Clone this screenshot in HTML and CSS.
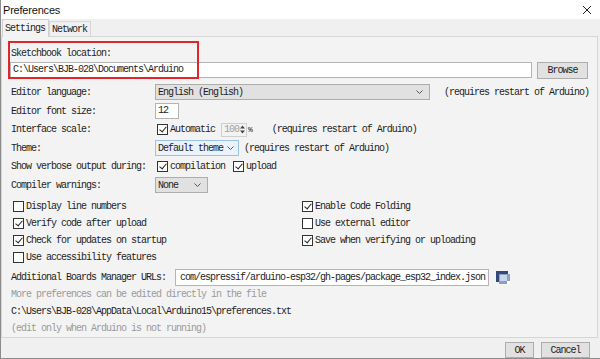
FILE: index.html
```html
<!doctype html>
<html>
<head>
<meta charset="utf-8">
<title>Preferences</title>
<link rel="stylesheet" href="styles.css">
</head>
<body>
<div class="win">
	<div class="titlebar">
		<span class="title">Preferences</span>
		<svg class="close" width="10" height="10" viewBox="0 0 10 10"><path d="M1 1L9 9M9 1L1 9" stroke="#222" stroke-width="1" fill="none"/></svg>
	</div>
	<div class="tabs">
		<span class="tab on">Settings</span>
		<span class="tab">Network</span>
	</div>
	<div class="panel">
		<div class="mark"></div>
		<div class="row">Sketchbook location:</div>
		<div class="row row-path">
			<span class="input path">C:\Users\BJB-028\Documents\Arduino</span>
			<span class="btn browse">Browse</span>
		</div>
		<div class="row row-lang">
			<span class="lbl">Editor language:</span>
			<span class="select lang">English (English)<svg class="arr" width="7" height="4" viewBox="0 0 7 4"><polyline points="0.5,0.5 3.5,3.5 6.5,0.5" fill="none" stroke="#555"/></svg></span>
			<span class="note lang-note">(requires restart of Arduino)</span>
		</div>
		<div class="row">
			<span class="lbl">Editor font size:</span>
			<span class="input size">12</span>
		</div>
		<div class="row">
			<span class="lbl">Interface scale:</span>
			<span class="cb on"></span>
			<span class="cb-text">Automatic</span>
			<span class="spin">100<svg width="5" height="9" viewBox="0 0 5 9"><path d="M0 3.5L2.5 0.5L5 3.5ZM0 5.5L2.5 8.5L5 5.5Z" fill="#444"/></svg></span>
			<span class="pct">%</span>
			<span class="note scale-note">(requires restart of Arduino)</span>
		</div>
		<div class="row">
			<span class="lbl">Theme:</span>
			<span class="select theme">Default theme<svg class="arr" width="7" height="4" viewBox="0 0 7 4"><polyline points="0.5,0.5 3.5,3.5 6.5,0.5" fill="none" stroke="#555"/></svg></span>
			<span class="note theme-note">(requires restart of Arduino)</span>
		</div>
		<div class="row">
			<span class="lbl">Show verbose output during:</span>
			<span class="cb on"></span>
			<span class="cb-text">compilation</span>
			<span class="cb on upload"></span>
			<span class="cb-text">upload</span>
		</div>
		<div class="row">
			<span class="lbl">Compiler warnings:</span>
			<span class="select warn">None<svg class="arr" width="7" height="4" viewBox="0 0 7 4"><polyline points="0.5,0.5 3.5,3.5 6.5,0.5" fill="none" stroke="#555"/></svg></span>
		</div>
		<div class="checks">
			<div class="check"><span class="cb"></span><span class="cb-text">Display line numbers</span></div>
			<div class="check"><span class="cb on"></span><span class="cb-text">Enable Code Folding</span></div>
			<div class="check"><span class="cb on"></span><span class="cb-text">Verify code after upload</span></div>
			<div class="check"><span class="cb"></span><span class="cb-text">Use external editor</span></div>
			<div class="check"><span class="cb on"></span><span class="cb-text">Check for updates on startup</span></div>
			<div class="check"><span class="cb on"></span><span class="cb-text">Save when verifying or uploading</span></div>
			<div class="check"><span class="cb"></span><span class="cb-text">Use accessibility features</span></div>
		</div>
		<div class="row row-url">
			<span class="lbl url-lbl">Additional Boards Manager URLs:</span>
			<span class="input url">com/espressif/arduino-esp32/gh-pages/package_esp32_index.json</span>
			<svg class="url-btn" width="16" height="16" viewBox="0 0 16 16">
				<rect x="1" y="1" width="12" height="11" fill="#34497a"/>
				<rect x="4" y="4" width="11" height="10" fill="#8da0c4"/>
				<rect x="5" y="5" width="7" height="6" fill="#c9d5ea"/>
				<rect x="12" y="11" width="3" height="3" fill="#fff"/>
			</svg>
		</div>
		<div class="info">
			<div class="dim">More preferences can be edited directly in the file</div>
			<div>C:\Users\BJB-028\AppData\Local\Arduino15\preferences.txt</div>
			<div class="dim">(edit only when Arduino is not running)</div>
		</div>
	</div>
	<div class="footer">
		<span class="btn ok">OK</span>
		<span class="btn cancel">Cancel</span>
	</div>
</div>
</body>
</html>
```

FILE: styles.css
```css
*{ margin:0; padding:0; box-sizing:border-box;}
body{ background:#f0f0f0; font-family:"Liberation Mono","DejaVu Sans Mono",monospace; font-size:10px; letter-spacing:-1px; color:#1e1e1e;}

.win{ width:600px; height:359px; display:flex; flex-direction:column; border-left:1px solid #8c8c8c; border-bottom:1px solid #8c8c8c; background:#f0f0f0;}

.titlebar{ height:19px; flex:none; display:flex; align-items:center; justify-content:space-between; background:#fff; padding:0 8px 0 2px;}
.title{ font-family:"Liberation Sans",Arial,sans-serif; font-size:11px; letter-spacing:-0.2px; color:#111;}
.close{ margin-top:1px;}

.tabs{ height:17px; flex:none; display:flex; align-items:flex-end; padding-left:1px;}
.tab{ height:15px; line-height:15px; padding:0 3px 0 2px; border:1px solid #d6d6d6; border-bottom:none; background:#f0f0f0;}
.tab.on{ height:18px; line-height:17px; margin-bottom:-1px; background:#f3f3f3; position:relative; z-index:1; border-color:#cfcfcf;}

.panel{ height:302px; flex:none; margin-right:2px; border:1px solid #d6d6d6; background:#f3f3f3; padding:9px 0 0 9px; display:flex; flex-direction:column; gap:3px; position:relative;}
.mark{ position:absolute; left:6px; top:4px; width:191px; height:38px; border:2px solid #e0252b; z-index:2;}

.row{ height:16px; display:flex; align-items:center; white-space:pre;}
.row-path{ margin-top:-2px;}
.row-lang{ margin-top:3px;}
.lbl{ width:144px; flex:none;}

.input{ height:16px; line-height:14px; border:1px solid #b4b4b4; background:#fff; padding-left:2px; white-space:pre; overflow:hidden;}
.path{ width:522px; margin-left:-1px;}
.size{ width:24px;}
.url{ width:314px; height:17px; line-height:15px; padding-left:4px;}

.btn{ display:flex; align-items:center; justify-content:center; height:16px; background:#e1e1e1; border:1px solid #adadad; color:#222;}
.browse{ width:51px; margin-left:5px; height:17px;}

.select{ height:16px; display:flex; align-items:center; justify-content:space-between; padding:0 6px 0 2px; background:#e1e1e1; border:1px solid #adadad;}
.lang{ width:275px;}
.theme{ width:84px; padding-right:4px; background:#eaf2fb; border-color:#9cc2e8;}
.warn{ width:53px;}
.arr{ flex:none;}

.note{ margin-left:14px;}
.scale-note{ margin-left:20px;}
.theme-note{ margin-left:5px;}

.cb{ width:11px; height:11px; flex:none; border:1px solid #333; background:#fff; margin-left:2px; position:relative;}
.cb.on:after{ content:""; position:absolute; left:3px; top:0; width:3px; height:6px; border:solid #222; border-width:0 1px 1px 0; transform:rotate(40deg);}
.cb-text{ margin-left:2px;}
.upload{ margin-left:8px;}

.spin{ width:26px; height:14px; margin-left:6px; border:1px solid #cfcfcf; background:#f3f3f3; color:#a0a0a0; display:flex; align-items:center; justify-content:space-between; padding:0 1px 0 2px;}
.pct{ margin-left:1px; font-size:8px;}

.checks{ margin-top:2px; display:grid; grid-template-columns:289px 1fr; grid-auto-rows:17px;}
.check{ display:flex; align-items:center; white-space:pre;}

.row-url{ height:17px; margin-top:0;}
.url-lbl{ width:164px;}
.url-btn{ margin-left:6px; flex:none;}

.info{ margin-top:-3px; display:flex; flex-direction:column;}
.info div{ height:17px; line-height:17px; white-space:pre;}
.info .dim{ color:#9a9a9a;}

.footer{ flex:1; display:flex; justify-content:flex-end; align-items:flex-start; gap:7px; padding:4px 10px 0 0;}
.ok{ width:29px;}
.cancel{ width:49px;}
```
